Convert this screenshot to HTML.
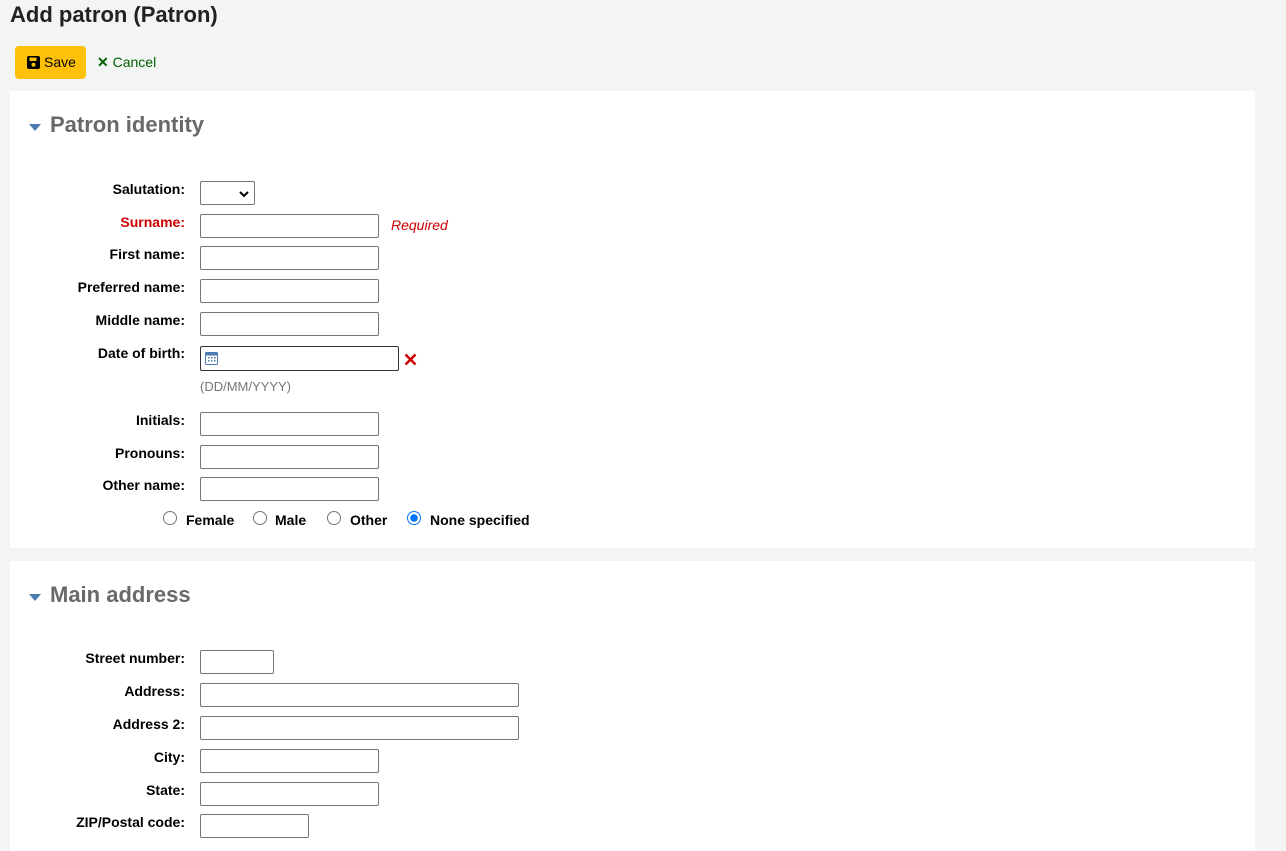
<!DOCTYPE html>
<html><head><meta charset="utf-8"><style>
body{margin:0;width:1286px;height:843px;overflow:hidden;background:#f3f4f4;font-family:"Liberation Sans",sans-serif;position:relative}
.a{position:absolute}
h1{position:absolute;left:10px;top:2px;margin:0;font-size:22px;font-weight:bold;color:#222}
.save{left:15px;top:46px;width:71px;height:33px;background:#ffc107;border-radius:4px;font-size:14px;color:#000;line-height:33px}
.panel{background:#fff;left:10px;width:1245px}
.hd{font-size:22px;font-weight:bold;color:#696969}
.tri{width:0;height:0;border-left:6px solid transparent;border-right:6px solid transparent;border-top:7px solid #4a7ab0}
.lb{width:185px;left:0;text-align:right;font-size:14px;font-weight:bold;color:#000;line-height:18px}
.in{height:22px;border:1px solid #767676;border-radius:2px;background:#fff;box-sizing:content-box}
.rad{width:12px;height:12px;border:1px solid #767676;border-radius:50%;background:#fff}
.rt{font-size:14px;font-weight:bold;line-height:18px}
</style></head><body>
<h1>Add patron (Patron)</h1>
<div class="a save"><svg class="a" style="left:12px;top:10px" width="13" height="13" viewBox="0 0 13 13"><rect x="0" y="0" width="13" height="13" rx="2" fill="#000"/><rect x="2.5" y="1.5" width="7" height="3.5" fill="#ffc107"/><circle cx="6.5" cy="8.7" r="2" fill="#ffc107"/></svg><span class="a" style="left:29px">Save</span></div>
<div class="a" style="left:97px;top:53px;font-size:14px;color:#006100;line-height:18px"><span style="font-weight:bold">✕</span> Cancel</div>

<div class="a panel" style="top:91px;height:457px"></div>
<div class="a tri" style="left:29px;top:124px"></div>
<div class="a hd" style="left:50px;top:112px">Patron identity</div>

<div class="a lb" style="top:180px">Salutation:</div>
<div class="a in" style="left:200px;top:181px;width:53px"><svg class="a" style="left:38px;top:8px" width="10" height="8" viewBox="0 0 10 8"><path d="M1 2l4 4 4-4" stroke="#000" stroke-width="2" fill="none"/></svg></div>
<div class="a lb" style="top:213px;color:#c00">Surname:</div>
<div class="a in" style="left:200px;top:214px;width:177px"></div>
<div class="a" style="left:391px;top:217px;font-size:14px;font-style:italic;color:#c00">Required</div>
<div class="a lb" style="top:245px">First name:</div>
<div class="a in" style="left:200px;top:246px;width:177px"></div>
<div class="a lb" style="top:278px">Preferred name:</div>
<div class="a in" style="left:200px;top:279px;width:177px"></div>
<div class="a lb" style="top:311px">Middle name:</div>
<div class="a in" style="left:200px;top:312px;width:177px"></div>
<div class="a lb" style="top:344px">Date of birth:</div>
<div class="a in" style="left:200px;top:346px;width:197px;height:23px;border-color:#333"><svg class="a" style="left:4px;top:5px" width="13" height="13" viewBox="0 0 13 13"><rect x="0.5" y="0.5" width="12" height="12" rx="1" fill="#fff" stroke="#4a7ab0"/><rect x="0.5" y="0.5" width="12" height="3" fill="#4a7ab0"/><g fill="#4a7ab0"><rect x="3" y="5" width="1.5" height="1.5"/><rect x="6" y="5" width="1.5" height="1.5"/><rect x="9" y="5" width="1.5" height="1.5"/><rect x="3" y="8" width="1.5" height="1.5"/><rect x="6" y="8" width="1.5" height="1.5"/><rect x="9" y="8" width="1.5" height="1.5"/></g></svg></div>
<svg class="a" style="left:404px;top:353px" width="13" height="13" viewBox="0 0 13 13"><path d="M1.5 1.5l10 10M11.5 1.5l-10 10" stroke="#c00" stroke-width="2.5"/></svg>
<div class="a" style="left:200px;top:379px;font-size:13px;color:#777">(DD/MM/YYYY)</div>
<div class="a lb" style="top:411px">Initials:</div>
<div class="a in" style="left:200px;top:412px;width:177px"></div>
<div class="a lb" style="top:444px">Pronouns:</div>
<div class="a in" style="left:200px;top:445px;width:177px"></div>
<div class="a lb" style="top:476px">Other name:</div>
<div class="a in" style="left:200px;top:477px;width:177px"></div>

<div class="a rad" style="left:163px;top:511px"></div><div class="a rt" style="left:186px;top:511px">Female</div>
<div class="a rad" style="left:253px;top:511px"></div><div class="a rt" style="left:275px;top:511px">Male</div>
<div class="a rad" style="left:327px;top:511px"></div><div class="a rt" style="left:350px;top:511px">Other</div>
<div class="a rad" style="left:407px;top:511px;border-color:#0075ff;background:radial-gradient(circle,#0075ff 0 3.5px,#fff 4px)"></div><div class="a rt" style="left:430px;top:511px">None specified</div>

<div class="a panel" style="top:561px;height:290px"></div>
<div class="a tri" style="left:29px;top:594px"></div>
<div class="a hd" style="left:50px;top:582px">Main address</div>
<div class="a lb" style="top:649px">Street number:</div>
<div class="a in" style="left:200px;top:650px;width:72px"></div>
<div class="a lb" style="top:682px">Address:</div>
<div class="a in" style="left:200px;top:683px;width:317px"></div>
<div class="a lb" style="top:715px">Address 2:</div>
<div class="a in" style="left:200px;top:716px;width:317px"></div>
<div class="a lb" style="top:748px">City:</div>
<div class="a in" style="left:200px;top:749px;width:177px"></div>
<div class="a lb" style="top:781px">State:</div>
<div class="a in" style="left:200px;top:782px;width:177px"></div>
<div class="a lb" style="top:813px">ZIP/Postal code:</div>
<div class="a in" style="left:200px;top:814px;width:107px"></div>
</body></html>
